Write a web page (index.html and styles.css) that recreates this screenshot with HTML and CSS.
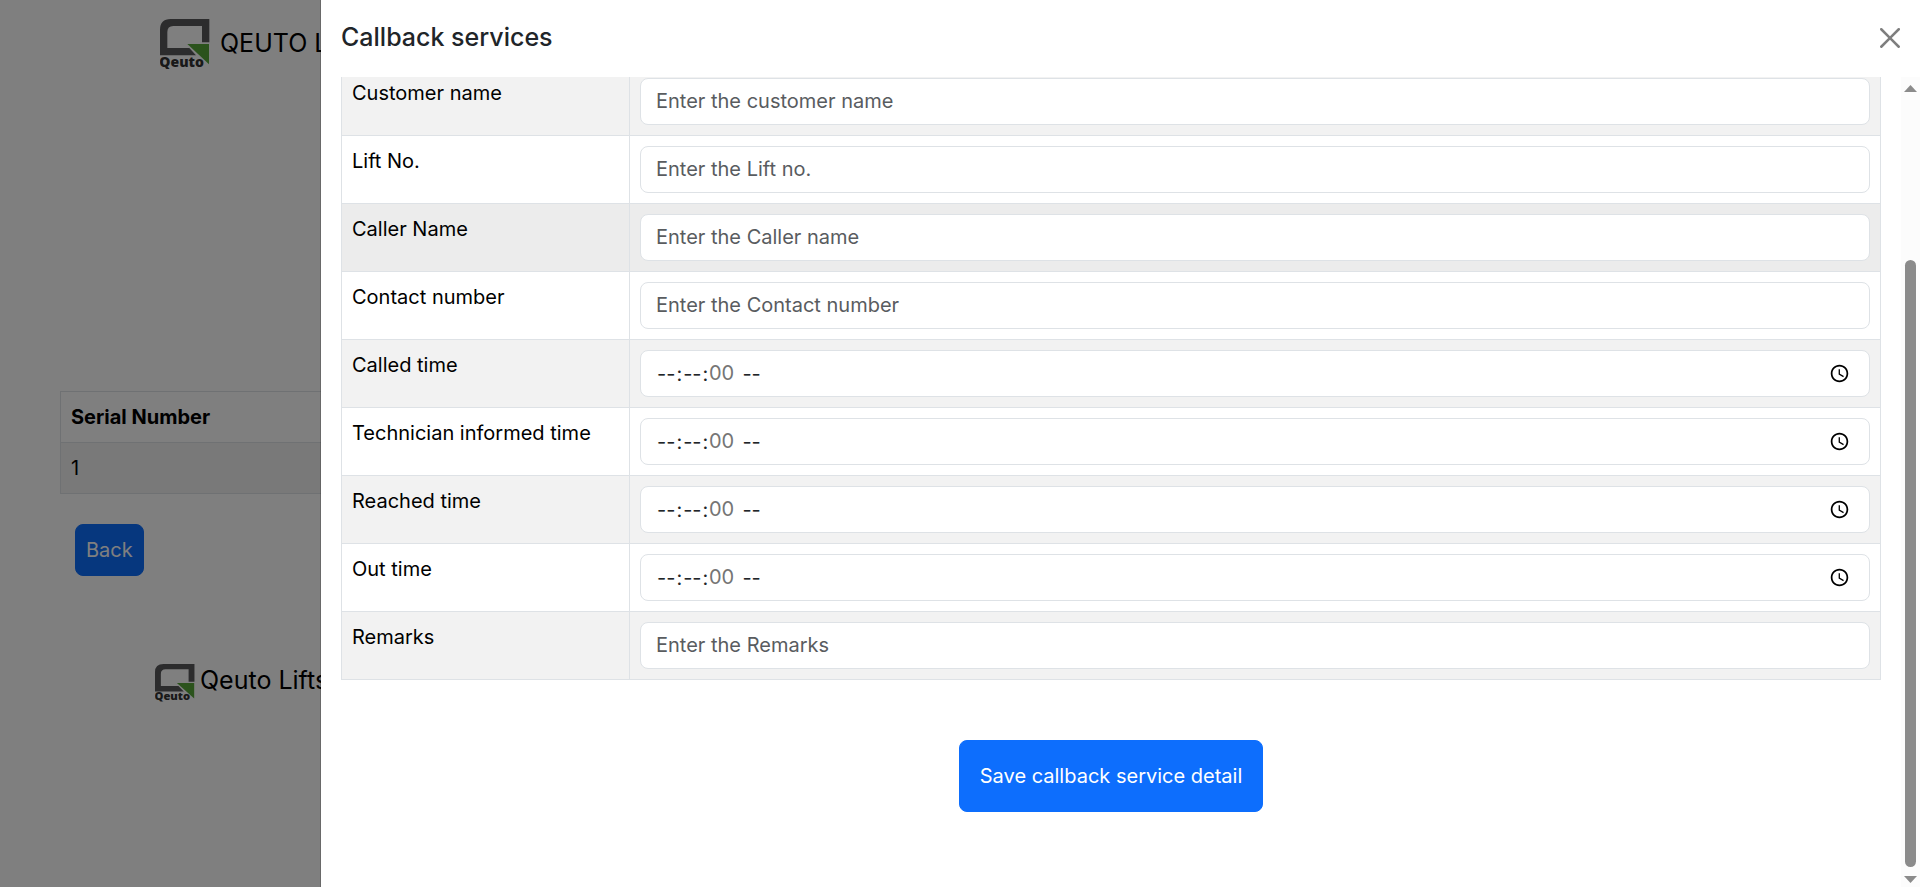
FILE: index.html
```html
<!DOCTYPE html>
<html lang="en">
<head>
<meta charset="utf-8">
<title>Callback services</title>
<link rel="stylesheet" href="styles.css">
</head>
<body>
<svg class="defs" aria-hidden="true">
  <symbol id="logo" viewBox="0 0 150 150" preserveAspectRatio="none">
    <path fill="#58585a" d="M0 109V32Q0 0 32 0H148V70H126V21H40Q22 21 22 39V87H88L108 109Z"/>
    <path fill="#57a639" d="M82 75H147V136Z"/>
    <text class="logo-text" x="-2" y="144">Qeuto</text>
  </symbol>
</svg>
<div class="page">
  <header class="brand"><svg class="brand-logo"><use href="#logo"/></svg><span>QEUTO LIFTS</span></header>
  <main class="content">
    <table class="table">
      <thead><tr><th>Serial Number</th></tr></thead>
      <tbody><tr><td>1</td></tr></tbody>
    </table>
    <button class="btn btn-back" type="button">Back</button>
  </main>
  <footer class="foot"><svg class="foot-logo"><use href="#logo"/></svg><span>Qeuto Lifts</span></footer>
</div>
<div class="backdrop"></div>
<section class="drawer" aria-labelledby="drawer-title">
  <div class="drawer-header">
    <h5 class="drawer-title" id="drawer-title">Callback services</h5>
    <button class="close" type="button" aria-label="Close"><svg viewBox="0 0 16 16"><path d="M.293.293a1 1 0 0 1 1.414 0L8 6.586 14.293.293a1 1 0 1 1 1.414 1.414L9.414 8l6.293 6.293a1 1 0 0 1-1.414 1.414L8 9.414l-6.293 6.293a1 1 0 0 1-1.414-1.414L6.586 8 .293 1.707a1 1 0 0 1 0-1.414z"/></svg></button>
  </div>
  <div class="drawer-body">
    <form class="form">
      <table class="table form-table">
        <tbody>
        <tr><td><label for="customer">Customer name</label></td><td><input class="field" id="customer" type="text" placeholder="Enter the customer name"></td></tr>
        <tr><td><label for="lift">Lift No.</label></td><td><input class="field" id="lift" type="text" placeholder="Enter the Lift no."></td></tr>
        <tr class="hover"><td><label for="caller">Caller Name</label></td><td><input class="field" id="caller" type="text" placeholder="Enter the Caller name"></td></tr>
        <tr><td><label for="contact">Contact number</label></td><td><input class="field" id="contact" type="text" placeholder="Enter the Contact number"></td></tr>
        <tr><td><label for="called">Called time</label></td><td><div class="time"><input class="field" id="called" type="time" step="1"><span class="seconds">00</span></div></td></tr>
        <tr><td><label for="informed">Technician informed time</label></td><td><div class="time"><input class="field" id="informed" type="time" step="1"><span class="seconds">00</span></div></td></tr>
        <tr><td><label for="reached">Reached time</label></td><td><div class="time"><input class="field" id="reached" type="time" step="1"><span class="seconds">00</span></div></td></tr>
        <tr><td><label for="out">Out time</label></td><td><div class="time"><input class="field" id="out" type="time" step="1"><span class="seconds">00</span></div></td></tr>
        <tr><td><label for="remarks">Remarks</label></td><td><input class="field" id="remarks" type="text" placeholder="Enter the Remarks"></td></tr>
        </tbody>
      </table>
      <button class="btn btn-save" type="button">Save callback service detail</button>
    </form>
    <div class="scrollbar" aria-hidden="true">
      <svg class="arrow" viewBox="0 0 13 7"><path d="M0 7L6.500 0L13 7Z"/></svg>
      <div class="thumb"></div>
      <svg class="arrow" viewBox="0 0 13 7"><path d="M0 0H13L6.500 7Z"/></svg>
    </div>
  </div>
</section>
</body>
</html>
```
FILE: styles.css
```css
* { box-sizing: border-box; }
html, body { height: 100%; }
body { margin: 0; overflow: hidden; font: 20px/30px Inter, "Liberation Sans", sans-serif; color: #212529; background: #fff; }
.defs { position: absolute; width: 0; height: 0; }
.logo-text { font: 800 42px "Open Sans", sans-serif; fill: #333; }

.page { display: flex; flex-direction: column; }
.brand, .foot { display: flex; align-items: flex-start; font-size: 25px; color: #000; }
.brand { gap: 10px; padding: 19px 160px 0; line-height: 48px; }
.brand-logo { width: 50px; height: 50px; }
.foot { gap: 5px; padding: 88px 155px 0; line-height: 32px; }
.foot-logo { width: 40px; height: 38px; }
.content { padding: 322px 60px 0; }

.table { width: 100%; border-collapse: collapse; color: #000; }
.table th, .table td { padding: 10px; border: 1px solid #dee2e6; text-align: left; vertical-align: top; }
.table th { font-weight: 700; }
.table tbody tr:nth-child(odd) { background: #f2f2f2; }
.table tbody tr.hover { background: #ececec; }

.btn { display: block; border: 1px solid #0d6efd; border-radius: 8px; background: #0d6efd; color: #fff; font: inherit; }
.btn-back { margin: 30px 0 0 15px; padding: 10px; }
.btn-save { margin: 60px auto 0; padding: 20px; }

.backdrop { position: fixed; inset: 0; background: rgba(0, 0, 0, .5); }
.drawer { position: fixed; top: 0; right: 0; bottom: 0; left: 320px; display: flex; flex-direction: column; background: #fff; background-clip: padding-box; border-left: 1px solid rgba(0, 0, 0, .175); }
.drawer-header { display: flex; align-items: center; justify-content: space-between; padding: 19px 20px 21px; }
.drawer-title { margin: 0; font-size: 25px; line-height: 37px; font-weight: 500; }
.close { display: flex; padding: 0; border: 0; background: none; opacity: .5; }
.close svg { width: 20px; height: 20px; }
.drawer-body { display: flex; flex: 1; min-height: 0; overflow: hidden; }
.form { flex: 1; min-width: 0; padding: 0 20px; margin-top: -10px; }
.form-table td:first-child { width: 288px; }
.field { display: block; width: 100%; height: 47px; padding: 6px 15px 8px; border: 1px solid #dee2e6; border-radius: 8px; background: #fff; color: #212529; font: inherit; }
.field::placeholder { color: #595c5f; opacity: 1; }

/* seconds are fixed at 00 and drawn in the slot of the seconds field */
.time { position: relative; }
.time .field { padding: 7px 16px 7px 15px; }
.field::-webkit-datetime-edit-second-field { margin-right: 9px; color: transparent; }
.seconds { position: absolute; top: 8px; left: 69px; color: #757575; pointer-events: none; }

.scrollbar { display: flex; flex-direction: column; align-items: center; width: 19px; padding: 8px 0 4px; background: #fcfcfc; }
.arrow { width: 13px; height: 7px; fill: #8b8b8b; }
.thumb { flex: 1; width: 11px; margin: 168px 0 9px; border-radius: 6px; background: #8b8b8b; }
```
